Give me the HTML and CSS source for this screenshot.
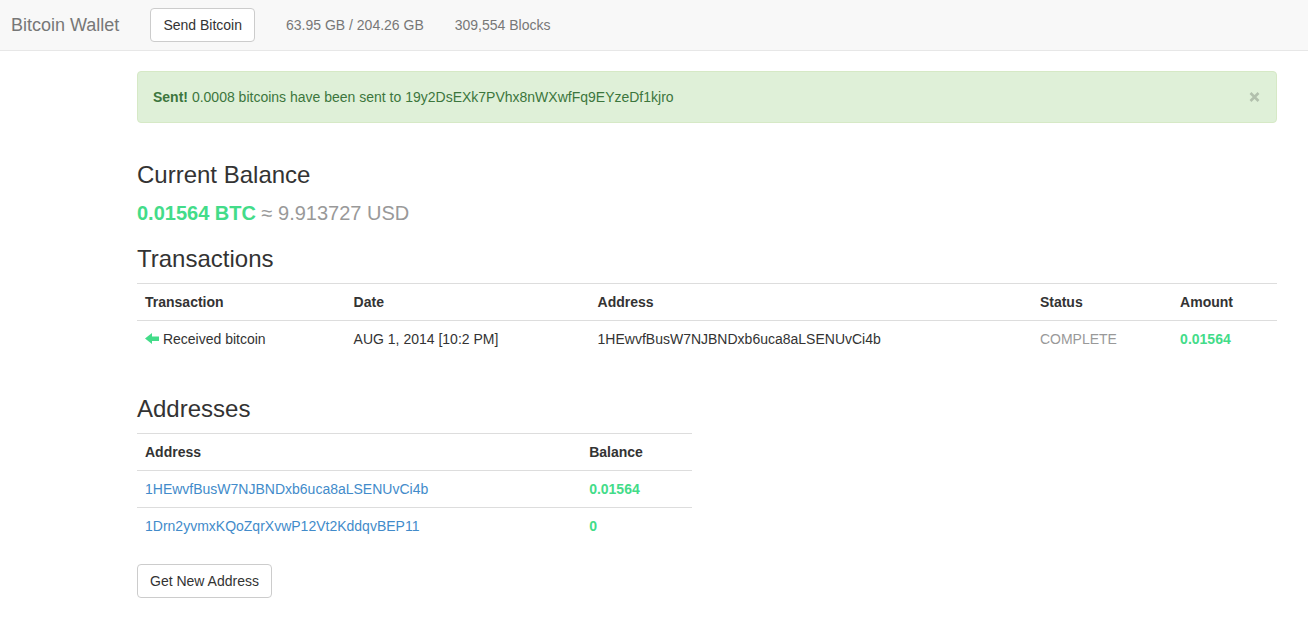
FILE: index.html
```html
<!DOCTYPE html>
<html lang="en">
<head>
<meta charset="utf-8">
<title>Bitcoin Wallet</title>
<link rel="stylesheet" href="styles.css">
</head>
<body>
<nav class="navbar">
  <a class="brand" href="#">Bitcoin Wallet</a>
  <button class="btn" type="button">Send Bitcoin</button>
  <span class="nav-text">63.95 GB / 204.26 GB</span>
  <span class="nav-text">309,554 Blocks</span>
</nav>
<main class="content">
  <div class="alert" role="alert">
    <p class="alert-text"><strong>Sent!</strong> 0.0008 bitcoins have been sent to 19y2DsEXk7PVhx8nWXwfFq9EYzeDf1kjro</p>
    <button class="close" type="button" aria-label="Close">
      <svg width="12" height="12" viewBox="0 0 12 12" aria-hidden="true"><path d="M1.5 2L9.5 10M9.5 2L1.5 10" stroke="#b2c0ad" stroke-width="2.6" fill="none"/></svg>
    </button>
  </div>
  <section class="section">
    <h3 class="heading">Current Balance</h3>
    <p class="balance"><strong class="amount">0.01564 BTC</strong> ≈ 9.913727 USD</p>
  </section>
  <section class="section">
    <h3 class="heading">Transactions</h3>
    <table class="table transactions">
      <colgroup><col class="col-kind"><col class="col-date"><col class="col-address"><col class="col-status"><col></colgroup>
      <thead>
        <tr><th>Transaction</th><th>Date</th><th>Address</th><th>Status</th><th>Amount</th></tr>
      </thead>
      <tbody>
        <tr>
          <td><svg class="arrow" width="14" height="12" viewBox="0 0 14 12" aria-hidden="true"><path d="M0 5.5L7 0V3.5H14V8H7V11Z" fill="#43dc89"/></svg> Received bitcoin</td>
          <td>AUG 1, 2014 [10:2 PM]</td>
          <td>1HEwvfBusW7NJBNDxb6uca8aLSENUvCi4b</td>
          <td class="muted">COMPLETE</td>
          <td><strong class="amount">0.01564</strong></td>
        </tr>
      </tbody>
    </table>
  </section>
  <section class="section addresses">
    <h3 class="heading">Addresses</h3>
    <table class="table">
      <colgroup><col class="col-wallet"><col></colgroup>
      <thead>
        <tr><th>Address</th><th>Balance</th></tr>
      </thead>
      <tbody>
        <tr><td><a class="link" href="#">1HEwvfBusW7NJBNDxb6uca8aLSENUvCi4b</a></td><td><strong class="amount">0.01564</strong></td></tr>
        <tr><td><a class="link" href="#">1Drn2yvmxKQoZqrXvwP12Vt2KddqvBEP11</a></td><td><strong class="amount">0</strong></td></tr>
      </tbody>
    </table>
    <button class="btn" type="button">Get New Address</button>
  </section>
</main>
</body>
</html>
```
FILE: styles.css
```css
* {
  box-sizing: border-box;
}

body {
  margin: 0;
  background: #fff;
  color: #333;
  font-family: "Liberation Sans", Arial, sans-serif;
  font-size: 14px;
  line-height: 20px;
}

.navbar {
  display: flex;
  align-items: center;
  gap: 31px;
  min-height: 51px;
  padding: 0 11px;
  background: #f8f8f8;
  border-bottom: 1px solid #e7e7e7;
}

.brand {
  color: #777;
  font-size: 18px;
  text-decoration: none;
}

.nav-text {
  color: #777;
}

.btn {
  height: 34px;
  padding: 6px 12px;
  background: #fff;
  border: 1px solid #ccc;
  border-radius: 4px;
  color: #333;
  font: inherit;
}

.content {
  padding: 20px 31px 20px 137px;
}

.alert {
  display: flex;
  align-items: center;
  justify-content: space-between;
  padding: 15px;
  margin-bottom: 38px;
  background: #dff0d8;
  border: 1px solid #d6e9c6;
  border-radius: 4px;
  color: #3c763d;
}

.alert-text {
  margin: 0;
}

.close {
  display: flex;
  padding: 0;
  background: none;
  border: 0;
}

.heading {
  margin: 0 0 10px;
  font-size: 24px;
  font-weight: 500;
  line-height: 28px;
}

.balance {
  margin: 0 0 18px;
  color: #999;
  font-size: 20px;
  line-height: 28px;
}

.amount {
  color: #43dc89;
}

.muted {
  color: #999;
}

.link {
  color: #428bca;
  text-decoration: none;
}

.table {
  width: 100%;
  border-collapse: separate;
  border-spacing: 0;
  table-layout: fixed;
}

.table th,
.table td {
  padding: 8px;
  border-top: 1px solid #ddd;
  text-align: left;
}

.transactions {
  margin-bottom: 38px;
}

.col-kind {
  width: 18.3%;
}

.col-date {
  width: 21.4%;
}

.col-address {
  width: 38.8%;
}

.col-status {
  width: 12.3%;
}

.col-wallet {
  width: 80%;
}

.arrow {
  vertical-align: -1px;
}

.addresses {
  width: 48.7%;
}

.addresses .table {
  margin-bottom: 20px;
}
```
